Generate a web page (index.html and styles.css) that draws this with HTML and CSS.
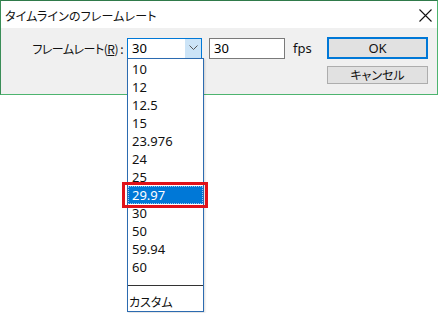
FILE: index.html
```html
<!DOCTYPE html>
<html lang="ja">
<head>
  <meta charset="UTF-8">
  <title>タイムラインのフレームレート</title>
  <link rel="stylesheet" href="styles.css">
</head>
<body>
  <div class="dialog">
    <div class="titlebar">
      <span class="title">タイムラインのフレームレート</span>
      <svg class="close" width="13" height="13" viewBox="0 0 13 13">
        <path d="M0.5 0.5 L12.5 12.5 M12.5 0.5 L0.5 12.5" stroke="#111" stroke-width="1.1" fill="none"/>
      </svg>
    </div>
    <div class="content">
      <div class="row">
        <label class="label">フレームレート(<u>R</u>) :</label>
        <div class="combo">
          <span class="combo-value">30</span>
          <span class="combo-btn">
            <svg width="9" height="6" viewBox="0 0 9 6">
              <path d="M0.5 0.5 L4.5 4.5 L8.5 0.5" stroke="#555" stroke-width="1" fill="none"/>
            </svg>
          </span>
        </div>
        <div class="textbox">30</div>
        <span class="unit">fps</span>
        <button class="btn btn-default">OK</button>
      </div>
      <div class="row row-end">
        <button class="btn">キャンセル</button>
      </div>
    </div>
  </div>

  <!-- open combo list -->
  <ul class="droplist">
    <li>10</li>
    <li>12</li>
    <li>12.5</li>
    <li>15</li>
    <li>23.976</li>
    <li>24</li>
    <li>25</li>
    <li class="selected">29.97</li>
    <li>30</li>
    <li>50</li>
    <li>59.94</li>
    <li>60</li>
    <li class="sep"></li>
    <li class="jp">カスタム</li>
  </ul>
  <div class="callout"></div>
</body>
</html>
```

FILE: styles.css
```css
body {
  margin: 0;
  background: #fff;
  font-family: "Noto Sans", "Noto Sans CJK JP", sans-serif;
  color: #000;
}
.dialog {
  width: 438px;
  border: 1px solid #4db46f;
  border-top-color: #2f7a4a;
  border-left-color: #3a8d57;
  box-sizing: border-box;
}
.titlebar {
  height: 27px;
  background: #fff;
  display: flex;
  align-items: center;
  justify-content: space-between;
  padding: 0 5px 0 4px;
}
.title {
  font-family: "Noto Sans CJK JP", sans-serif;
  font-feature-settings: "palt";
  font-size: 12px;
  letter-spacing: 0.15px;
  color: #111;
  margin-top: 1px;
}
.close {
  margin-top: 1px;
}
.content {
  background: #f0f0f0;
  height: 66px;
  padding: 9px 9px 0 0;
  box-sizing: border-box;
}
.row {
  display: flex;
  align-items: center;
  height: 22px;
}
.row-end {
  justify-content: flex-end;
  margin-top: 7px;
  height: 18px;
}
.label {
  width: 122px;
  text-align: right;
  margin-right: 4px;
  font-family: "Noto Sans CJK JP", sans-serif;
  font-feature-settings: "palt";
  font-size: 12px;
  letter-spacing: -0.5px;
  color: #111;
}
.label u {
  text-underline-offset: 1px;
}
.combo {
  width: 75px;
  height: 21px;
  border: 1px solid #0078d7;
  box-sizing: border-box;
  background: #fff;
  display: flex;
  align-items: stretch;
}
.combo-value {
  flex: 1;
  font-size: 13px;
  line-height: 19px;
  padding-left: 4px;
}
.combo-btn {
  width: 16px;
  background: #cce4f7;
  display: flex;
  align-items: center;
  justify-content: center;
}
.textbox {
  width: 76px;
  height: 21px;
  margin-left: 7px;
  border: 1px solid #7a7a7a;
  box-sizing: border-box;
  background: #fff;
  font-size: 13px;
  line-height: 19px;
  padding-left: 4px;
}
.unit {
  margin-left: 8px;
  font-size: 13px;
  color: #111;
}
.btn {
  width: 101px;
  background: #e1e1e1;
  border: 1px solid #adadad;
  box-sizing: border-box;
  margin: 0 0 0 auto;
  padding: 0;
  height: 18px;
  font-family: "Noto Sans CJK JP", sans-serif;
  font-feature-settings: "palt";
  font-size: 12px;
  color: #111;
  line-height: 16px;
}
.btn-default {
  height: 22px;
  border: 2px solid #0078d7;
  font-family: "Noto Sans", sans-serif;
  font-size: 13px;
  line-height: 18px;
}
.droplist {
  position: absolute;
  left: 127px;
  top: 58px;
  width: 77px;
  margin: 0;
  padding: 1px 0 0;
  list-style: none;
  background: #fff;
  border: 1px solid #2c6bb0;
  box-sizing: border-box;
  height: 254px;
  box-shadow: 1px 1px 2px rgba(0, 0, 0, 0.15);
}
.droplist li {
  height: 18px;
  line-height: 18px;
  font-size: 13px;
  padding-left: 4px;
  color: #111;
}
.droplist li.selected {
  background: #0078d7;
  color: #fff;
  outline: 1px dotted #9cc6ee;
  outline-offset: -1px;
}
.droplist li.sep {
  height: 0;
  border-top: 1px solid #333;
  margin: 9px 0 7px;
}
.droplist li.jp {
  font-family: "Noto Sans CJK JP", sans-serif;
  font-feature-settings: "palt";
  font-size: 12px;
  padding-left: 1px;
}
.callout {
  position: absolute;
  left: 122px;
  top: 182px;
  width: 86px;
  height: 26px;
  border: 3px solid #e0121a;
  box-sizing: border-box;
}
```
